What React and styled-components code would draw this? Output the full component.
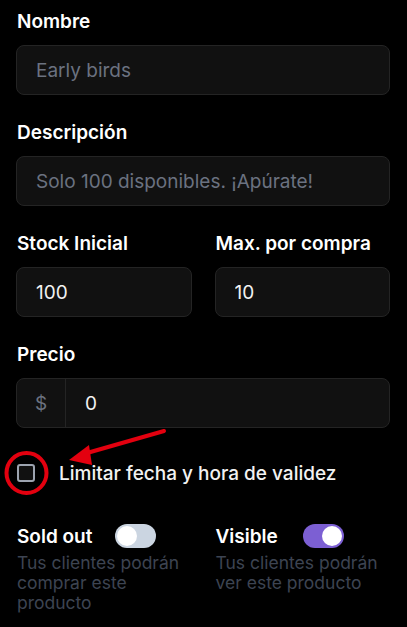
import { styled, createGlobalStyle } from "styled-components";

const GlobalStyle = createGlobalStyle`
  html, body {
    margin: 0;
    padding: 0;
    background: #000;
  }
  body {
    font-family: Inter, "Noto Sans", "Liberation Sans", sans-serif;
    color: #fff;
  }
`;

const Form = styled.div`
  display: flex;
  flex-direction: column;
  gap: 26px;
  padding: 10px 17px 0 16px;
  width: 407px;
  height: 627px;
  box-sizing: border-box;
  overflow: hidden;
`;

const Field = styled.div`
  display: flex;
  flex-direction: column;
  gap: 11px;
  min-width: 0;
`;

const Label = styled.label`
  font-size: 19px;
  line-height: 24px;
  font-weight: 600;
  color: #fff;
  padding-left: 1px;
`;

const Row = styled.div`
  display: grid;
  grid-template-columns: 1fr 1fr;
  gap: 23px;
`;

const InputBox = styled.div`
  display: flex;
  align-items: stretch;
  height: 50px;
  box-sizing: border-box;
  background: #111111;
  border: 1px solid #242424;
  border-radius: 8px;
  overflow: hidden;
`;

const Addon = styled.span`
  display: flex;
  align-items: center;
  justify-content: center;
  width: 48px;
  flex-shrink: 0;
  border-right: 1px solid #242424;
  color: #6b7280;
  font-size: 19px;
`;

const Input = styled.input`
  flex: 1;
  min-width: 0;
  background: transparent;
  border: none;
  outline: none;
  padding: 0 19px;
  font-family: inherit;
  font-size: 19px;
  color: #f2f2f2;

  &::placeholder {
    color: #6b7280;
  }
`;

const CheckRow = styled.div`
  position: relative;
  display: flex;
  align-items: center;
  gap: 24px;
  margin-top: 7px;
  padding-left: 1px;
  height: 24px;
`;

const Box = styled.span`
  width: 18px;
  height: 18px;
  box-sizing: border-box;
  border: 2px solid #9ca3af;
  border-radius: 3px;
  background: #111;
`;

const CheckText = styled.span`
  font-size: 19px;
  font-weight: 500;
  color: #f2f2f2;
`;

const Annotation = styled.svg`
  position: absolute;
  left: -16px;
  top: -40px;
  pointer-events: none;
`;

const ToggleGroup = styled.div`
  display: flex;
  flex-direction: column;
  gap: 5px;
`;

const ToggleHead = styled.div`
  display: flex;
  align-items: center;
  gap: ${(p) => p.$gap}px;
  height: 24px;
  padding-left: 1px;
`;

const ToggleLabel = styled.span`
  font-size: 19px;
  font-weight: 600;
  color: #fff;
`;

const Switch = styled.span`
  position: relative;
  width: 41px;
  height: 24px;
  border-radius: 12px;
  background: ${(p) => (p.$on ? "#7c5fd3" : "#cbd5e1")};
  flex-shrink: 0;

  &::after {
    content: "";
    position: absolute;
    top: 2px;
    left: ${(p) => (p.$on ? "19px" : "2px")};
    width: 20px;
    height: 20px;
    border-radius: 50%;
    background: #fff;
  }
`;

const Hint = styled.p`
  margin: 0;
  padding-left: 1px;
  font-size: 17.5px;
  line-height: 20px;
  color: #3d4452;
`;

const Toggles = styled(Row)`
  margin-top: 13px;
`;

export default function App() {
  return (
    <>
      <GlobalStyle />
      <Form>
        <Field>
          <Label>Nombre</Label>
          <InputBox>
            <Input placeholder="Early birds" />
          </InputBox>
        </Field>
        <Field>
          <Label>Descripción</Label>
          <InputBox>
            <Input placeholder="Solo 100 disponibles. ¡Apúrate!" />
          </InputBox>
        </Field>
        <Row>
          <Field>
            <Label>Stock Inicial</Label>
            <InputBox>
              <Input defaultValue="100" />
            </InputBox>
          </Field>
          <Field>
            <Label>Max. por compra</Label>
            <InputBox>
              <Input defaultValue="10" />
            </InputBox>
          </Field>
        </Row>
        <Field>
          <Label>Precio</Label>
          <InputBox>
            <Addon>$</Addon>
            <Input defaultValue="0" />
          </InputBox>
        </Field>

        <CheckRow>
          <Box />
          <CheckText>Limitar fecha y hora de validez</CheckText>
          {/* marca roja sobre el checkbox */}
          <Annotation width="180" height="90" viewBox="0 0 180 90">
            <circle cx="26.5" cy="52" r="20" fill="none" stroke="#e3000f" strokeWidth="4" />
            <line x1="164" y1="10" x2="80" y2="34" stroke="#e3000f" strokeWidth="4" strokeLinecap="round" />
            <polygon points="69,39 89,24 92,44" fill="#e3000f" />
          </Annotation>
        </CheckRow>

        <Toggles>
          <ToggleGroup>
            <ToggleHead $gap={23}>
              <ToggleLabel>Sold out</ToggleLabel>
              <Switch />
            </ToggleHead>
            <Hint>Tus clientes podrán comprar este producto</Hint>
          </ToggleGroup>
          <ToggleGroup>
            <ToggleHead $gap={25}>
              <ToggleLabel>Visible</ToggleLabel>
              <Switch $on />
            </ToggleHead>
            <Hint>Tus clientes podrán ver este producto</Hint>
          </ToggleGroup>
        </Toggles>
      </Form>
    </>
  );
}
